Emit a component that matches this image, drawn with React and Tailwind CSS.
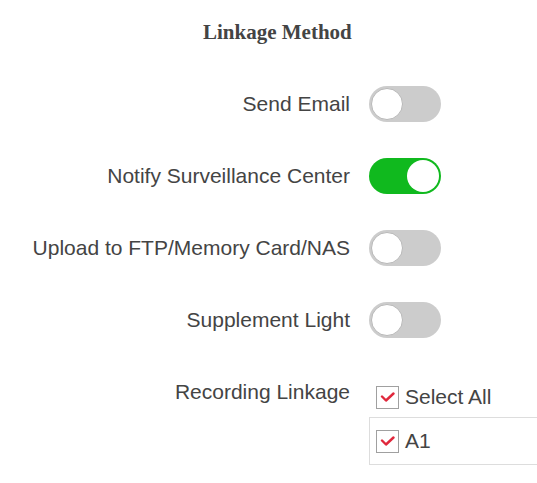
import React from 'react';

const labelFont = { fontFamily: '"Liberation Sans", Arial, sans-serif' };

function Toggle({ on }) {
  return (
    <div
      className={`w-[72px] h-[36px] rounded-full p-[2px] flex items-center ${
        on ? 'bg-[#10b91e] justify-end' : 'bg-[#cccccc] justify-start'
      }`}
    >
      <div
        className={`w-[32px] h-[32px] rounded-full bg-white ${on ? '' : 'border border-[#b8b8b8]'}`}
      />
    </div>
  );
}

function Check({ label }) {
  return (
    <div className="flex items-center gap-[6px] h-[24px]">
      <div className="w-[23px] h-[23px] shrink-0 border border-[#a0a0a0] bg-white flex items-center justify-center">
        <svg width="15" height="12" viewBox="0 0 15 12" fill="none">
          <polyline points="2,5.5 6,9.5 13.5,2.5" stroke="#e0283c" strokeWidth="2.4" strokeLinecap="round" strokeLinejoin="round" />
        </svg>
      </div>
      <span className="text-[21px] text-[#444444] leading-[24px] whitespace-nowrap">{label}</span>
    </div>
  );
}

const rows = [
  { label: 'Send Email', on: false },
  { label: 'Notify Surveillance Center', on: true },
  { label: 'Upload to FTP/Memory Card/NAS', on: false },
  { label: 'Supplement Light', on: false },
];

export default function App() {
  return (
    <div className="w-[537px] h-[483px] overflow-hidden bg-white" style={labelFont}>
      <div
        className="mt-[20px] mb-[24px] ml-[203px] text-[21px] leading-[24px] font-bold text-[#444444]"
        style={{ fontFamily: '"Liberation Serif", "Times New Roman", serif' }}
      >
        Linkage Method
      </div>

      {rows.map((row) => (
        <div key={row.label} className="flex items-center h-[72px]">
          <div className="w-[350px] shrink-0 text-right text-[21px] leading-[24px] text-[#444444]">{row.label}</div>
          <div className="ml-[19px] shrink-0">
            <Toggle on={row.on} />
          </div>
        </div>
      ))}

      <div className="flex items-start pt-[24px]">
        <div className="w-[350px] shrink-0 text-right text-[21px] leading-[24px] text-[#444444]">Recording Linkage</div>
        <div className="ml-[19px] pt-[5px] shrink-0">
          <div className="pl-[7px]">
            <Check label="Select All" />
          </div>
          <div className="mt-[8px] w-[200px] h-[48px] border border-[#dddddd] pl-[6px] flex items-center">
            <Check label="A1" />
          </div>
        </div>
      </div>
    </div>
  );
}
